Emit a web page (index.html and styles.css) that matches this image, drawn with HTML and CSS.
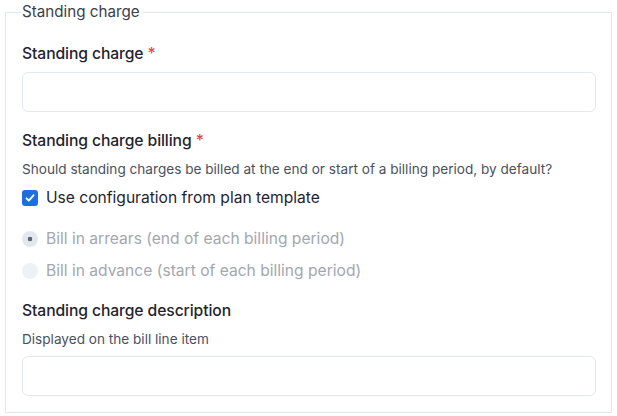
FILE: index.html
```html
<!DOCTYPE html>
<html lang="en">
<head>
    <meta charset="UTF-8">
    <title>Standing charge</title>
    <link rel="stylesheet" href="styles.css">
</head>
<body>
    <fieldset class="group">
        <legend>Standing charge</legend>

        <div class="field">
            <label class="label" for="charge">Standing charge <span class="req">*</span></label>
            <input class="input" id="charge" type="text">
        </div>

        <div class="field">
            <div class="label">Standing charge billing <span class="req">*</span></div>
            <p class="help">Should standing charges be billed at the end or start of a billing period, by default?</p>
            <label class="check">
                <input type="checkbox" checked>
                <span>Use configuration from plan template</span>
            </label>
            <div class="radios">
                <label class="radio disabled">
                    <input type="radio" name="billing" checked disabled>
                    <span>Bill in arrears (end of each billing period)</span>
                </label>
                <label class="radio disabled">
                    <input type="radio" name="billing" disabled>
                    <span>Bill in advance (start of each billing period)</span>
                </label>
            </div>
        </div>

        <div class="field">
            <label class="label" for="desc">Standing charge description</label>
            <p class="help">Displayed on the bill line item</p>
            <input class="input" id="desc" type="text">
        </div>
    </fieldset>
</body>
</html>
```

FILE: styles.css
```css
body { margin: 0; padding: 2px 5px 0; font-family: Inter, "Noto Sans", sans-serif; color: #1f2430; background: #fff; }
.group {
    margin: 0;
    border: 1px solid #e2e8f0;
    padding: 0 15px 16px 16px;
}
.group legend { font-size: 15.2px; color: #3a3f4a; padding: 0 1px; margin-left: -1px; line-height: 20px; }
.field { margin-top: 18px; }
.field:first-of-type { margin-top: 21px; }
.field:first-of-type .label { margin-bottom: 7px; }
.label { display: block; font-size: 15.7px; font-weight: 500; line-height: 22px; margin-bottom: 8px; letter-spacing: -0.1px; }
.req { color: #e5484d; }
.help { font-size: 13.6px; color: #4a5060; margin: 1px 0 8px; line-height: 19px; }
.field:last-child .help { margin: 0 0 7px; }
.input {
    display: block;
    box-sizing: border-box;
    width: 100%;
    height: 40px;
    border: 1px solid #e2e8f0;
    border-radius: 6px;
    background: #fff;
}
.check, .radio { display: flex; align-items: center; gap: 8px; font-size: 15.6px; line-height: 22px; }
.check input, .radio input {
    appearance: none;
    margin: 0;
    width: 16px;
    height: 16px;
    flex: none;
}
.check input {
    border-radius: 3px;
    background: #1e6fdc url("data:image/svg+xml,%3Csvg xmlns='http://www.w3.org/2000/svg' viewBox='0 0 16 16'%3E%3Cpath d='M4.5 8.3l2.3 2.4 4.7-5.4' fill='none' stroke='%23fff' stroke-width='1.8' stroke-linecap='round' stroke-linejoin='round'/%3E%3C/svg%3E") center / 16px no-repeat;
}
.radio input { border-radius: 50%; background: #eef1f5; }
.radio input:checked { background: radial-gradient(circle, #5b6577 0 2px, #e3e7ee 2.6px); }
.radios { margin-top: 19px; display: flex; flex-direction: column; gap: 10px; }
.radio.disabled { color: #a3a7ae; }
```
